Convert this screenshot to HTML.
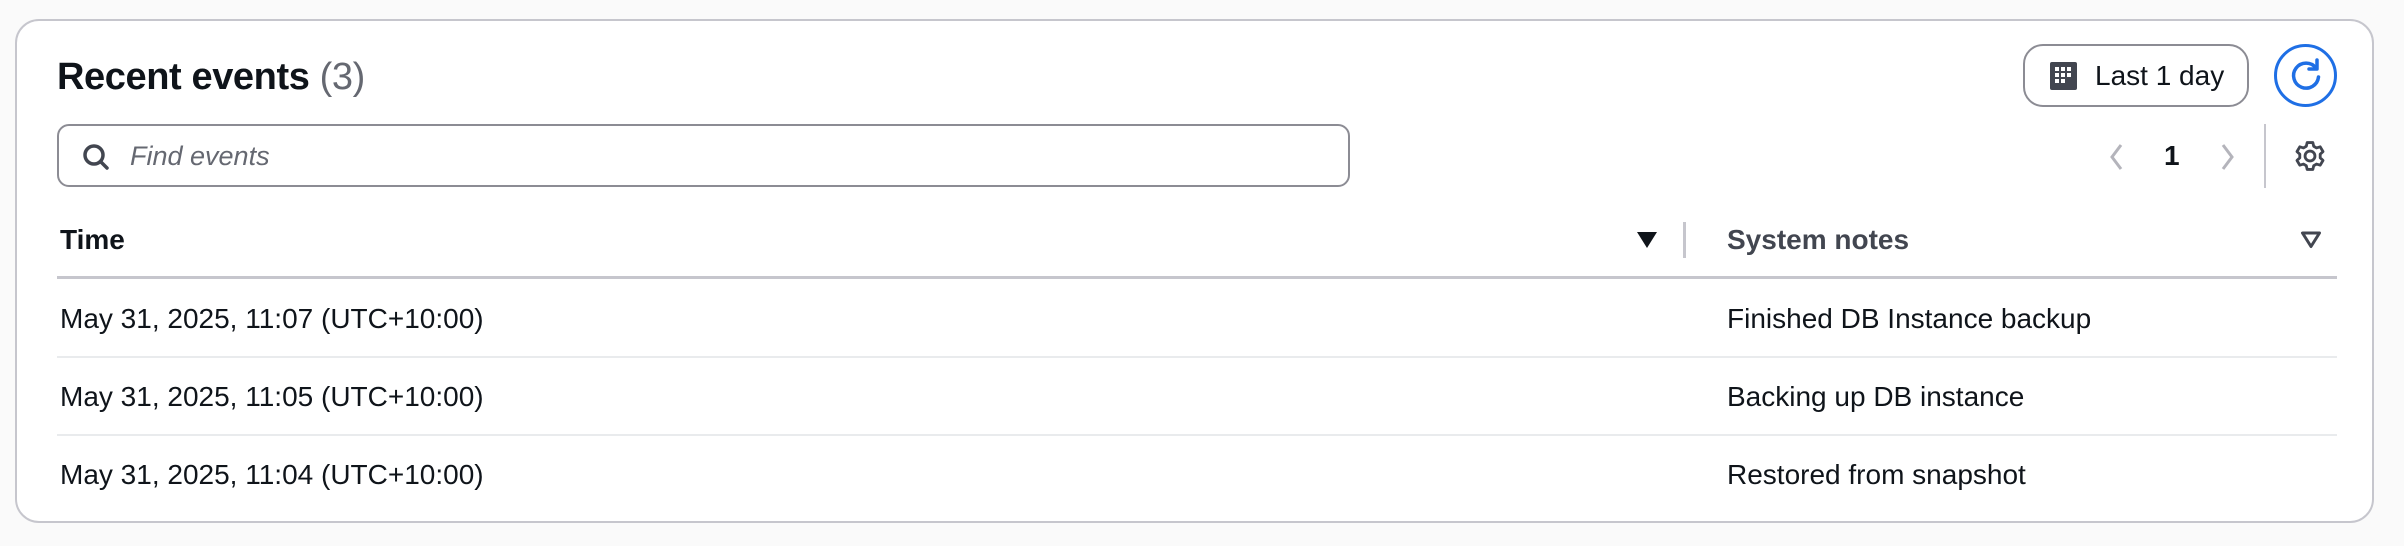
<!DOCTYPE html>
<html><head><style>
body{margin:0;width:2404px;height:546px;background:#fafafa;font-family:"Liberation Sans",sans-serif;position:relative;overflow:hidden;color:#0f141a}
.panel{position:absolute;left:15px;top:19px;width:2359px;height:504px;background:#fff;border:2px solid #c6c6cd;border-radius:24px;box-sizing:border-box}
.a{position:absolute;white-space:nowrap}
.t{font-size:28px;line-height:30px}
.line{position:absolute;left:57px;width:2280px;height:2px;background:#e9ebed}
</style></head><body>
<div class="panel"></div>
<div class="a" style="left:57px;top:55px;font-size:38px;font-weight:bold;line-height:44px;letter-spacing:-0.4px">Recent events <span style="font-weight:normal;color:#656871">(3)</span></div>
<div class="a" style="left:57px;top:124px;width:1293px;height:63px;border:2px solid #8c8c94;border-radius:12px;box-sizing:border-box"></div>
<svg class="a" style="left:80px;top:142px" width="32" height="32" viewBox="0 0 32 32"><circle cx="14" cy="13" r="9" fill="none" stroke="#424650" stroke-width="3.5"/><line x1="20.5" y1="19.5" x2="27" y2="26" stroke="#424650" stroke-width="3.5" stroke-linecap="round"/></svg>
<div class="a t" style="left:130px;top:141px;font-style:italic;color:#656871;font-size:27px">Find events</div>
<div class="a" style="left:2023px;top:44px;width:226px;height:63px;border:2px solid #8c8c94;border-radius:20px;box-sizing:border-box"></div>
<svg class="a" style="left:2050px;top:62px" width="27" height="28" viewBox="0 0 27 28"><rect x="0" y="0" width="27" height="28" rx="2" fill="#424650"/><g fill="#fff"><rect x="5" y="5" width="4" height="4"/><rect x="11" y="5" width="4" height="4"/><rect x="17" y="5" width="4" height="4"/><rect x="5" y="11" width="4" height="4"/><rect x="11" y="11" width="4" height="4"/><rect x="17" y="11" width="4" height="4"/><rect x="5" y="17" width="4" height="4"/><rect x="11" y="17" width="4" height="4"/></g></svg>
<div class="a t" style="left:2095px;top:61px;font-size:28px">Last 1 day</div>
<div class="a" style="left:2274px;top:44px;width:63px;height:63px;border:3px solid #1f6fe5;border-radius:50%;box-sizing:border-box"></div>
<svg class="a" style="left:2286px;top:56px" width="40" height="40" viewBox="0 0 40 40"><path d="M30 12 A12.5 12.5 0 1 0 32.5 21" fill="none" stroke="#1f6fe5" stroke-width="3.5" stroke-linecap="round"/><path d="M31 4 V13 H23" fill="none" stroke="#1f6fe5" stroke-width="3.5" stroke-linecap="round" stroke-linejoin="round"/></svg>
<svg class="a" style="left:2108px;top:143px" width="16" height="28" viewBox="0 0 16 28"><path d="M13 2 L4 14 L13 26" fill="none" stroke="#b4b4bb" stroke-width="3"/></svg>
<div class="a t" style="left:2164px;top:141px;font-weight:bold">1</div>
<svg class="a" style="left:2220px;top:143px" width="16" height="28" viewBox="0 0 16 28"><path d="M3 2 L12 14 L3 26" fill="none" stroke="#b4b4bb" stroke-width="3"/></svg>
<div class="a" style="left:2264px;top:124px;width:2px;height:64px;background:#c6c6cd"></div>
<svg class="a" style="left:2293px;top:139px" width="34" height="34" viewBox="0 0 24 24"><path d="M12 15.5A3.5 3.5 0 1 0 12 8.5A3.5 3.5 0 1 0 12 15.5Z" fill="none" stroke="#424650" stroke-width="2"/><path d="M10 2.5h4l.6 2.6 2 1.2 2.6-.8 2 3.4-2 1.8v2.6l2 1.8-2 3.4-2.6-.8-2 1.2-.6 2.6h-4l-.6-2.6-2-1.2-2.6.8-2-3.4 2-1.8v-2.6l-2-1.8 2-3.4 2.6.8 2-1.2z" fill="none" stroke="#424650" stroke-width="2" stroke-linejoin="round"/></svg>
<div class="a t" style="left:60px;top:225px;font-weight:bold">Time</div>
<svg class="a" style="left:1636px;top:231px" width="22" height="18" viewBox="0 0 22 18"><path d="M1 1H21L11 17Z" fill="#0f141a"/></svg>
<div class="a" style="left:1683px;top:222px;width:3px;height:36px;background:#c6c6cd"></div>
<div class="a t" style="left:1727px;top:225px;font-weight:bold;color:#424650">System notes</div>
<svg class="a" style="left:2300px;top:231px" width="22" height="18" viewBox="0 0 22 18"><path d="M2.5 2H19.5L11 15.5Z" fill="none" stroke="#424650" stroke-width="3" stroke-linejoin="round"/></svg>
<div class="line" style="top:276px;height:3px;background:#c6c6cd"></div>
<div class="a t" style="left:60px;top:304px">May 31, 2025, 11:07 (UTC+10:00)</div>
<div class="a t" style="left:1727px;top:304px">Finished DB Instance backup</div>
<div class="line" style="top:356px"></div>
<div class="a t" style="left:60px;top:382px">May 31, 2025, 11:05 (UTC+10:00)</div>
<div class="a t" style="left:1727px;top:382px">Backing up DB instance</div>
<div class="line" style="top:434px"></div>
<div class="a t" style="left:60px;top:460px">May 31, 2025, 11:04 (UTC+10:00)</div>
<div class="a t" style="left:1727px;top:460px">Restored from snapshot</div>
</body></html>
